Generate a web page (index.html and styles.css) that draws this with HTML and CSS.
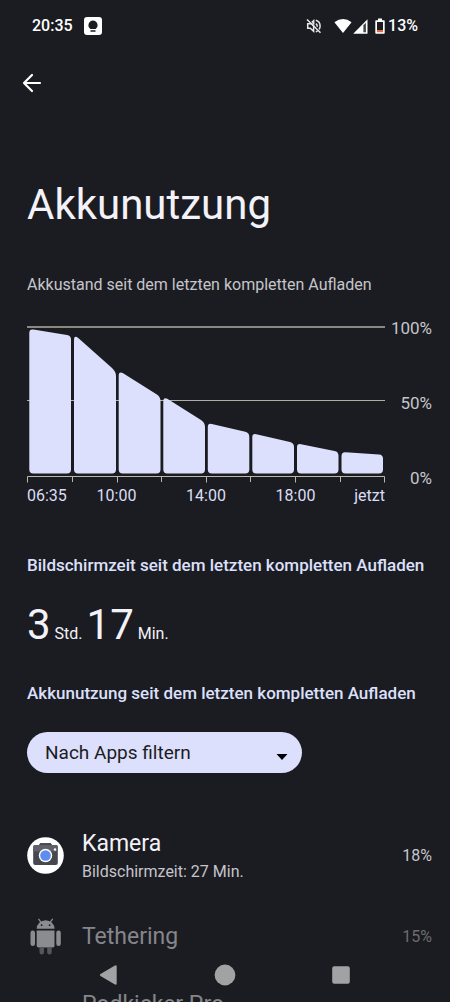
FILE: index.html
```html
<!DOCTYPE html>
<html lang="de">
<head>
<meta charset="utf-8">
<title>Akkunutzung</title>
<meta name="viewport" content="width=device-width, initial-scale=1">
<link rel="stylesheet" href="styles.css">
</head>
<body>

<div class="screen">
 <header class="statusbar">
  <span>20:35</span>
  <svg class="note" width="18" height="18" viewBox="0 0 18 18">
   <rect width="18" height="18" rx="3" fill="#fff"/>
   <path d="M9 3.500a4.700 4.700 0 0 0-2.600 8.500h5.200A4.700 4.700 0 0 0 9 3.500zM6.500 13.200h5v1.600h-5z" fill="#1b1c21"/>
  </svg>
  <span class="spacer"></span>
  <svg class="mute" width="16" height="16" viewBox="0 0 16 16" fill="none" stroke="#e6e6ea" stroke-width="1.500">
   <path d="M1.700 5.800v4.400h2.600l3.300 3v-5.600L5.800 5.800z"/>
   <path d="M5.800 4.400l1.900-1.700v3.800M9.800 5.700q1.500.7 1.500 3M9.800 2.300q4.300 1.300 4.300 5.700 0 2-1 3.400M9.800 13.700q1-.3 1.800-.9"/>
   <path d="M1 1.500l13.500 13.300"/>
  </svg>
  <svg class="wifi" width="18" height="16" viewBox="0 0 18 16">
   <path d="M9 15L.6 4.600Q.4 4.200.8 3.900Q4.400 1 9 1t8.200 2.900q.4.300.2.700z" fill="#fff"/>
  </svg>
  <svg width="15" height="15" viewBox="0 0 15 15">
   <path d="M14.500.3V14.700H.2z" fill="#fff"/>
   <path d="M10.400 6.300l2.500-2.500v9.400h-2.500z" fill="#44454b"/>
  </svg>
  <svg class="battery" width="10" height="16" viewBox="0 0 10 16">
   <path d="M3 .5h4v1.800h2q.7 0 .7.700v12q0 .7-.7.700H1q-.7 0-.7-.7V3q0-.7.7-.7h2z" fill="#fff"/>
   <path d="M2 4h6v8H2z" fill="#1b1c21"/>
   <path d="M2 12h6v2.200H2z" fill="#e8693f"/>
  </svg>
  <span>13%</span>
 </header>

 <main class="content">
  <button class="back" type="button" aria-label="Zurück">
   <svg width="20" height="20" viewBox="0 0 20 20" fill="none" stroke="#fff" stroke-width="2.200" stroke-linecap="round" stroke-linejoin="round">
    <path d="M18 10H2M10 2L2 10l8 8"/>
   </svg>
  </button>
  <h1>Akkunutzung</h1>

  <p class="caption">Akkustand seit dem letzten kompletten Aufladen</p>
  <div class="chart">
   <div class="plot">
    <svg viewBox="0 0 358 163" preserveAspectRatio="none">
     <path d="M0 7h358" stroke="#89897f" stroke-width="2"/>
     <path d="M0 80.500h358" stroke="#aeada6"/>
     <!-- one bar per two hours, top edge follows the level -->
     <g fill="#dde0fc">
      <path d="M2.300 149.500V13Q2.300 9 6.300 9.600L40 14.900Q44 15.500 44 19.500V149.500Q44 153.500 40 153.500H6.300Q2.300 153.500 2.300 149.500z"/>
      <path d="M47 149.500V19.800Q47 14.600 51.500 18.200L85 48Q89 51.700 89 56V149.500Q89 153.500 85 153.500H51Q47 153.500 47 149.500z"/>
      <path d="M91.700 149.500V55.500Q91.700 51 95.700 53L129.500 74.200Q133.500 76.700 133.500 81V149.500Q133.500 153.500 129.500 153.500H95.700Q91.700 153.500 91.700 149.500z"/>
      <path d="M136.300 149.500V81.500Q136.300 77 140.300 78.800L174 100Q178 102.500 178 107V149.500Q178 153.500 174 153.500H140.300Q136.300 153.500 136.300 149.500z"/>
      <path d="M180.800 149.500V107Q180.800 103.100 184.800 104L218.300 111.800Q222.300 112.700 222.300 117V149.500Q222.300 153.500 218.300 153.500H184.800Q180.800 153.500 180.800 149.500z"/>
      <path d="M225.300 149.500V117.300Q225.300 113.300 229.300 114.200L263 122Q267 123 267 127V149.500Q267 153.500 263 153.500H229.300Q225.300 153.500 225.300 149.500z"/>
      <path d="M270 149.500V127.400Q270 123.400 274 124.200L307.500 130.900Q311.500 131.700 311.500 135.700V149.500Q311.500 153.500 307.500 153.500H274Q270 153.500 270 149.500z"/>
      <path d="M314.500 149.500V136.100Q314.500 132.100 318.500 132.300L352 134.400Q356 134.600 356 138.600V149.500Q356 153.500 352 153.500H318.500Q314.500 153.500 314.500 149.500z"/>
     </g>
     <path d="M.500 162.500V156.500H357.500V162.500M45.500 156v6M90.500 156v6.500M134.500 156v6M179.500 156v6.500M223.500 156v6M268.500 156v6.500M313.500 156v6" fill="none" stroke="#b9b8ae"/>
    </svg>
    <div class="hours">
     <span>06:35</span><span>10:00</span><span>14:00</span><span>18:00</span><span>jetzt</span>
    </div>
   </div>
   <div class="levels"><span>100%</span><span>50%</span><span>0%</span></div>
  </div>

  <h2>Bildschirmzeit seit dem letzten kompletten Aufladen</h2>
  <p class="time"><b>3</b> Std. <b>17</b> Min.</p>

  <h2>Akkunutzung seit dem letzten kompletten Aufladen</h2>
  <div class="filter">
   <select aria-label="Filter">
    <option>Nach Apps filtern</option>
   </select>
   <svg width="12" height="6" viewBox="0 0 12 6"><path d="M.5 0h11L6 6z" fill="#000"/></svg>
  </div>

  <ul class="apps">
   <li>
    <svg width="37" height="37" viewBox="0 0 37 37">
     <circle cx="18.500" cy="18.500" r="18.300" fill="#fff"/>
     <path d="M8.200 8h4l1-1.800h10.600l1 1.800h4q2 0 2 2v16q0 2-2 2H8.200q-2 0-2-2V10q0-2 2-2z" fill="#46484e"/>
     <path d="M6.200 14.500V10q0-2 2-2h20.600q2 0 2 2v4.500z" fill="#606269"/>
     <path d="M12.200 8l1-1.800h10.600l1 1.800z" fill="#46484e"/>
     <circle cx="18.500" cy="18.500" r="6.700" fill="#fff"/>
     <circle cx="18.500" cy="18.500" r="5.300" fill="#5e8df0"/>
     <circle cx="28" cy="12.500" r="1.200" fill="#fff"/>
    </svg>
    <div class="app"><strong>Kamera</strong><small>Bildschirmzeit: 27 Min.</small></div>
    <span class="share">18%</span>
   </li>
   <li class="dim">
    <svg width="37" height="37" viewBox="0 0 37 37">
     <g fill="#8b8c90">
      <path d="M9.700 10.800a8.900 8.600 0 0 1 17.800 0z"/>
      <rect x="3.500" y="12.500" width="4.500" height="15.500" rx="2.200"/>
      <rect x="29.300" y="12.500" width="4.500" height="15.500" rx="2.200"/>
      <path d="M9.700 12.500h17.800v15.200q0 1.800-1.800 1.800H11.500q-1.800 0-1.800-1.800z"/>
     </g>
     <path d="M11.500.8l2.600 3.600M25.700.8l-2.600 3.600" stroke="#8b8c90" stroke-width="1.300"/>
     <circle cx="14.600" cy="7.200" r=".9" fill="#1b1c21"/>
     <circle cx="22.600" cy="7.200" r=".9" fill="#1b1c21"/>
     <path d="M12.500 29.500H17v4.800a2.200 2.200 0 0 1-4.500 0zM20.200 29.500h4.500v4.800a2.200 2.200 0 0 1-4.500 0z" fill="#55565b"/>
    </svg>
    <div class="app"><strong>Tethering</strong></div>
    <span class="share">15%</span>
   </li>
   <li class="dim">
    <span></span>
    <div class="app"><strong>Podkicker Pro</strong></div>
   </li>
  </ul>
 </main>

 <nav class="navbar">
  <button type="button" aria-label="Zurück">
   <svg width="22" height="22" viewBox="0 0 22 22"><path d="M2.500 10L16.500 1.700q2.200-1.200 2.200.9v16.800q0 2.100-2.200.9L2.500 12q-1.500-1 0-2z" fill="#a1a2a4"/></svg>
  </button>
  <button type="button" aria-label="Startbildschirm">
   <svg width="22" height="22" viewBox="0 0 22 22"><circle cx="11" cy="11" r="10.400" fill="#a1a2a4"/></svg>
  </button>
  <button type="button" aria-label="Letzte Apps">
   <svg width="22" height="22" viewBox="0 0 22 22"><rect x="2.200" y="2.200" width="17.600" height="17.600" rx="2" fill="#a1a2a4"/></svg>
  </button>
 </nav>
</div>

</body>
</html>
```

FILE: styles.css
```css
* {
 box-sizing:border-box;
}
body {
 margin:0;
 color:#e4e3ea;
 background-color:#1b1c21;
 font-family:Roboto,"Noto Sans",sans-serif;
 font-size:16px;
 line-height:20px;
}
h1, h2, p, ul {
 margin:0;
 padding:0;
}
svg {
 display:block;
}
button {
 padding:0;
 border:none;
 background:none;
}
.screen {
 position:relative;
 height:100vh;
 overflow:hidden;
}

.statusbar {
 display:flex;
 align-items:center;
 height:52px;
 padding:0 32px;
 color:#fff;
 font-weight:500;
}
.note {
 margin-left:11px;
}
.spacer {
 flex:1;
}
.mute {
 margin-right:12px;
}
.wifi {
 margin-right:1px;
}
.battery {
 margin:0 3px 0 7px;
}

.content {
 padding:21px 18px 0 27px;
}
.back {
 display:block;
 margin-left:-5px;
}
h1 {
 margin-top:88px;
 color:#f3f2f9;
 font-size:42px;
 font-weight:400;
 line-height:48px;
}
.caption {
 margin-top:46px;
 color:#c5c5cb;
}

.chart {
 display:flex;
 margin-top:25px;
}
.plot {
 flex:1;
}
.plot svg {
 width:100%;
 height:163px;
}
.hours {
 display:grid;
 grid-template-columns:1fr 2fr 2fr 2fr 1fr;
 margin-top:3px;
 color:#dcdef5;
 text-align:center;
}
.hours span:first-child {
 text-align:left;
}
.hours span:last-child {
 text-align:right;
}
.levels {
 display:flex;
 flex-direction:column;
 justify-content:space-between;
 width:47px;
 height:170px;
 margin-top:-2px;
 color:#c5c5cb;
 font-size:17px;
 text-align:right;
}

h2 {
 margin-top:49px;
 color:#dde0fc;
 font-size:17px;
 font-weight:500;
 line-height:20px;
}
.time {
 margin-top:26px;
 line-height:48px;
 color:#f3f2f9;
}
.time b {
 font-size:42px;
 font-weight:400;
}
.time + h2 {
 margin-top:25px;
}

.filter {
 position:relative;
 width:275px;
 margin-top:29px;
}
.filter select {
 width:100%;
 height:41px;
 padding:0 18px;
 border:none;
 border-radius:21px;
 color:#1b1c21;
 background-color:#dde0fc;
 font:400 19px Roboto,"Noto Sans",sans-serif;
 appearance:none;
}
.filter svg {
 position:absolute;
 right:14px;
 top:22px;
 pointer-events:none;
}

.apps {
 margin-top:42px;
 list-style:none;
}
.apps li {
 display:grid;
 grid-template-columns:37px 1fr auto;
 column-gap:18px;
 align-items:center;
 height:81px;
}
.app strong, .app small {
 display:block;
}
.app strong {
 color:#f3f2f9;
 font-size:23px;
 font-weight:400;
 line-height:32px;
}
.app small {
 color:#c5c5cb;
 font-size:16px;
 line-height:24px;
}
.share {
 color:#c5c5cb;
}
.apps .dim strong {
 color:#85868b;
}
.dim .share {
 color:#6b6c70;
}
.apps .dim:last-child {
 height:56px;
}

/* lies over the list */
.navbar {
 position:absolute;
 left:0;
 right:0;
 bottom:0;
 display:flex;
 justify-content:center;
 gap:94px;
 height:55px;
}
```
